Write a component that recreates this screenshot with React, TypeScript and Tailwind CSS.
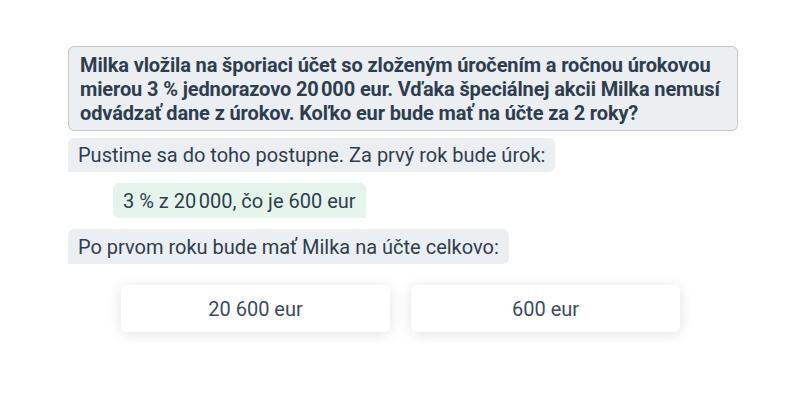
export default function App() {
  return (
    <div className="w-[800px] h-[400px] bg-white pt-[46px] font-['Roboto',sans-serif] text-[#2c3e50]">
      <div className="ml-[68px] w-[670px] flex flex-col items-start">
        <div className="w-full border border-[#c3c7cb] bg-[#eceff1] rounded-md pl-[11px] pr-3 pt-[6px] pb-[5px] text-[20px] leading-[24px] font-bold tracking-[-0.13px]">
          Milka vložila na šporiaci účet so zloženým úročením a ročnou úrokovou mierou 3&nbsp;% jednorazovo 20&#8239;000 eur. Vďaka špeciálnej akcii Milka nemusí odvádzať dane z úrokov. Koľko eur bude mať na účte za 2 roky?
        </div>
        <div className="mt-[7px] bg-[#eceff1] rounded-md rounded-bl-none px-[10px] h-[34px] flex items-center text-[20px]">
          Pustime sa do toho postupne. Za prvý rok bude úrok:
        </div>
        <div className="mt-[11px] ml-[45px] bg-[#e6f5ec] rounded-md rounded-br-none px-[10px] h-[35px] flex items-center text-[20px]">
          3&nbsp;% z 20&#8239;000, čo je 600 eur
        </div>
        <div className="mt-[11px] bg-[#eceff1] rounded-md rounded-bl-none px-[10px] h-[35px] flex items-center text-[20px]">
          Po prvom roku bude mať Milka na účte celkovo:
        </div>
        <div className="mt-[21px] ml-[53px] flex gap-[21px]">
          <button className="w-[269px] h-[47px] bg-white rounded-md shadow-[0_2px_14px_rgba(0,0,0,0.12)] text-[20px] text-[#3d4b5e]">
            20 600 eur
          </button>
          <button className="w-[269px] h-[47px] bg-white rounded-md shadow-[0_2px_14px_rgba(0,0,0,0.12)] text-[20px] text-[#3d4b5e]">
            600 eur
          </button>
        </div>
      </div>
    </div>
  );
}
